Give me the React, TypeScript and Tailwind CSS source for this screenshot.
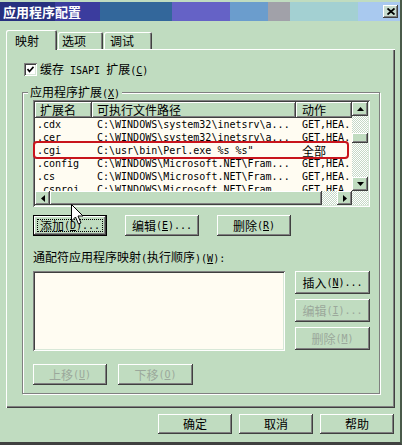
import React from "react";

type C = { children?: React.ReactNode };

const A = ({ children }: C) => (
  <span className="font-['DejaVu_Sans_Mono'] text-[10px]">{children}</span>
);
const U = ({ children }: C) => <span className="underline underline-offset-1">{children}</span>;

function Btn({
  size,
  children,
  disabled = false,
  isDefault = false,
}: {
  size: string;
  children: React.ReactNode;
  disabled?: boolean;
  isDefault?: boolean;
}) {
  const txt = disabled ? "text-[#9ba89b]" : "text-black";
  if (isDefault) {
    return (
      <div className={`${size} flex border border-black`}>
        <div className="flex flex-1 p-[3px] shadow-[inset_-1px_-1px_#404040,inset_1px_1px_#ffffff,inset_-2px_-2px_#808080]">
          <div className={`flex flex-1 items-center justify-center border border-dotted border-black ${txt}`}>
            {children}
          </div>
        </div>
      </div>
    );
  }
  return (
    <div
      className={`${size} flex items-center justify-center shadow-[inset_-1px_-1px_#404040,inset_1px_1px_#ffffff,inset_-2px_-2px_#808080] ${txt}`}
    >
      {children}
    </div>
  );
}

function Arrow({ dir }: { dir: "up" | "down" | "left" | "right" }) {
  const pts =
    dir === "up"
      ? "0,4 7,4 3.5,0"
      : dir === "down"
      ? "0,0 7,0 3.5,4"
      : dir === "left"
      ? "4,0 4,7 0,3.5"
      : "0,0 0,7 4,3.5";
  const w = dir === "up" || dir === "down" ? 7 : 4;
  const h = dir === "up" || dir === "down" ? 4 : 7;
  return (
    <svg width={w} height={h} viewBox={`0 0 ${w} ${h}`}>
      <polygon points={pts} fill="#000" />
    </svg>
  );
}

const rows: [string, string, string][] = [
  [".cdx", "C:\\WINDOWS\\system32\\inetsrv\\a...", "GET,HEA..."],
  [".cer", "C:\\WINDOWS\\system32\\inetsrv\\a...", "GET,HEA..."],
  [".cgi", "C:\\usr\\bin\\Perl.exe %s %s\"", "全部"],
  [".config", "C:\\WINDOWS\\Microsoft.NET\\Fram...", "GET,HEA..."],
  [".cs", "C:\\WINDOWS\\Microsoft.NET\\Fram...", "GET,HEA..."],
  [".csproj", "C:\\WINDOWS\\Microsoft.NET\\Fram...", "GET,HEA..."],
];

export default function App() {
  return (
    <div className="relative w-[402px] h-[445px] overflow-hidden bg-[#c0dcc0] font-['Noto_Sans_CJK_SC'] text-[12px] leading-[14px] text-black border-r-2 border-b-[3px] border-r-[#4a5a4a] border-b-[#404040]">
      {/* Title bar */}
      <div className="mt-[2px] h-[19px] flex items-center pl-[3px] bg-[linear-gradient(90deg,#27307f_0px,#27307f_55px,#3b3c9e_55px,#3b3c9e_100px,#33679b_100px,#33679b_172px,#6562c6_172px,#6562c6_230px,#6b9dcd_230px,#6b9dcd_268px,#a1a1a9_268px,#a1a1a9_290px,#a3d0d2_290px,#a3d0d2_358px,#a9c9ef_358px)]">
        <span className="text-white font-bold text-[13px] leading-[15px]">应用程序配置</span>
        <div className="ml-auto mr-[2px] w-[15px] h-[13px] flex items-center justify-center bg-[#c8dcd0] shadow-[inset_-1px_-1px_#404040,inset_1px_1px_#ffffff,inset_-2px_-2px_#808080]">
          <svg width="8" height="7" viewBox="0 0 8 7">
            <path d="M0.5 0.5 L7.5 6.5 M7.5 0.5 L0.5 6.5" stroke="#000" strokeWidth="1.8" />
          </svg>
        </div>
      </div>

      {/* Tabs */}
      <div className="relative z-10 mt-[9px] h-[20px] pl-[6px] flex items-end">
        <div className="w-[51px] h-[20px] pl-[9px] pt-[4px] bg-[#c0dcc0] rounded-t-[2px] shadow-[inset_1px_1px_#ffffff,inset_-1px_0_#404040,inset_-2px_0_#808080]">
          映射
        </div>
        <div className="ml-[1px] mb-[1px] w-[45px] h-[17px] pl-[4px] pt-[2px] rounded-t-[2px] shadow-[inset_1px_1px_#ffffff,inset_-1px_0_#404040,inset_-2px_0_#808080]">
          选项
        </div>
        <div className="ml-[1px] mb-[1px] w-[48px] h-[17px] pl-[6px] pt-[2px] rounded-t-[2px] shadow-[inset_1px_1px_#ffffff,inset_-1px_0_#404040,inset_-2px_0_#808080]">
          调试
        </div>
      </div>

      {/* Tab panel */}
      <div className="-mt-[1px] ml-[6px] w-[389px] h-[359px] pl-[16px] pt-[14px] shadow-[inset_1px_1px_#ffffff,inset_-1px_-1px_#404040,inset_-2px_-2px_#808080]">
        <div className="flex items-center h-[13px] pl-[2px]">
          <div className="w-[13px] h-[13px] bg-white flex items-center justify-center shadow-[inset_1px_1px_#808080,inset_-1px_-1px_#ffffff,inset_2px_2px_#404040,inset_-2px_-2px_#d8e8d8]">
            <svg width="7" height="7" viewBox="0 0 7 7">
              <path d="M0.5 3 L2.5 5.5 L6.5 0.8" stroke="#000" strokeWidth="1.7" fill="none" />
            </svg>
          </div>
          <span className="ml-[3px] whitespace-nowrap">
            缓存<A> ISAPI </A>扩展<A>(<U>C</U>)</A>
          </span>
        </div>

        {/* Group box */}
        <div className="relative mt-[16px] w-[358px] border border-[#808080] shadow-[inset_1px_1px_#ffffff,1px_1px_#ffffff] pl-[10px] pt-[7px] pb-[8px]">
          <span className="absolute -top-[8px] left-[5px] px-[2px] bg-[#c0dcc0] leading-[14px] whitespace-nowrap">
            应用程序扩展<A>(<U>X</U>)</A>
          </span>

          {/* List view */}
          <div className="relative w-[337px] h-[107px] p-[2px] bg-[#fffcf2] shadow-[inset_1px_1px_#808080,inset_-1px_-1px_#ffffff,inset_2px_2px_#404040,inset_-2px_-2px_#d8e8d8]">
            <div className="flex h-[89px]">
              <div className="w-[317px] overflow-hidden">
                <div className="flex h-[16px] bg-[#c0dcc0] leading-[16px]">
                  <div className="w-[57px] pl-[5px] shadow-[inset_-1px_-1px_#404040,inset_1px_1px_#ffffff,inset_-2px_-2px_#808080]">扩展名</div>
                  <div className="w-[204px] pl-[5px] shadow-[inset_-1px_-1px_#404040,inset_1px_1px_#ffffff,inset_-2px_-2px_#808080]">可执行文件路径</div>
                  <div className="w-[56px] pl-[6px] shadow-[inset_-1px_-1px_#404040,inset_1px_1px_#ffffff,inset_-2px_-2px_#808080]">动作</div>
                </div>
                {rows.map((r, i) => (
                  <div key={i} className="flex h-[13px] leading-[13px] whitespace-nowrap">
                    <div className="w-[57px] pl-[2px] overflow-hidden font-['DejaVu_Sans_Mono'] text-[10px]">{r[0]}</div>
                    <div className="w-[204px] pl-[5px] overflow-hidden font-['DejaVu_Sans_Mono'] text-[10px]">{r[1]}</div>
                    {r[2] === "全部" ? (
                      <div className="w-[56px] pl-[6px] overflow-hidden text-[12px]">{r[2]}</div>
                    ) : (
                      <div className="w-[56px] pl-[6px] overflow-hidden font-['DejaVu_Sans_Mono'] text-[10px]">{r[2]}</div>
                    )}
                  </div>
                ))}
              </div>
              {/* vertical scrollbar */}
              <div className="w-[16px] flex flex-col">
                <div className="h-[14px] flex items-center justify-center bg-[#c0dcc0] shadow-[inset_-1px_-1px_#404040,inset_1px_1px_#ffffff,inset_-2px_-2px_#808080]">
                  <Arrow dir="up" />
                </div>
                <div className="h-[17px] bg-[repeating-conic-gradient(#ffffff_0_25%,#c6d8c6_0_50%)] bg-[length:2px_2px]" />
                <div className="h-[10px] bg-[#c0dcc0] shadow-[inset_-1px_-1px_#404040,inset_1px_1px_#ffffff,inset_-2px_-2px_#808080]" />
                <div className="h-[34px] bg-[repeating-conic-gradient(#ffffff_0_25%,#c6d8c6_0_50%)] bg-[length:2px_2px]" />
                <div className="h-[14px] flex items-center justify-center bg-[#c0dcc0] shadow-[inset_-1px_-1px_#404040,inset_1px_1px_#ffffff,inset_-2px_-2px_#808080]">
                  <Arrow dir="down" />
                </div>
              </div>
            </div>
            {/* horizontal scrollbar */}
            <div className="flex h-[14px]">
              <div className="w-[15px] flex items-center justify-center bg-[#c0dcc0] shadow-[inset_-1px_-1px_#404040,inset_1px_1px_#ffffff,inset_-2px_-2px_#808080]">
                <Arrow dir="left" />
              </div>
              <div className="w-[272px] bg-[#c0dcc0] shadow-[inset_-1px_-1px_#404040,inset_1px_1px_#ffffff,inset_-2px_-2px_#808080]" />
              <div className="w-[15px] bg-[repeating-conic-gradient(#ffffff_0_25%,#c6d8c6_0_50%)] bg-[length:2px_2px]" />
              <div className="w-[15px] flex items-center justify-center bg-[#c0dcc0] shadow-[inset_-1px_-1px_#404040,inset_1px_1px_#ffffff,inset_-2px_-2px_#808080]">
                <Arrow dir="right" />
              </div>
              <div className="w-[16px] bg-[repeating-conic-gradient(#ffffff_0_25%,#c6d8c6_0_50%)] bg-[length:2px_2px]" />
            </div>
            {/* red annotation */}
            <div className="absolute left-[0px] top-[41px] w-[316px] h-[18px] border-2 border-[#c8141c] rounded-[4px]" />
          </div>

          {/* buttons */}
          <div className="mt-[8px] flex gap-[18px]">
            <Btn size="w-[74px] h-[21px]" isDefault>
              添加<A>(<U>D</U>)...</A>
            </Btn>
            <Btn size="w-[74px] h-[21px]">
              编辑<A>(<U>E</U>)...</A>
            </Btn>
            <Btn size="w-[74px] h-[21px]">
              删除<A>(<U>R</U>)</A>
            </Btn>
          </div>

          <div className="mt-[14px] whitespace-nowrap">
            通配符应用程序映射<A>(</A>执行顺序<A>)(<U>W</U>):</A>
          </div>

          <div className="mt-[5px] flex gap-[10px]">
            <div className="w-[252px] h-[80px] bg-[#fffcf2] shadow-[inset_1px_1px_#808080,inset_-1px_-1px_#ffffff,inset_2px_2px_#404040,inset_-2px_-2px_#d8e8d8]" />
            <div className="flex flex-col gap-[5px]">
              <Btn size="w-[75px] h-[23px]">
                插入<A>(<U>N</U>)...</A>
              </Btn>
              <Btn size="w-[75px] h-[23px]" disabled>
                编辑<A>(<U>I</U>)...</A>
              </Btn>
              <Btn size="w-[75px] h-[23px]" disabled>
                删除<A>(<U>M</U>)</A>
              </Btn>
            </div>
          </div>

          <div className="mt-[13px] flex gap-[11px]">
            <Btn size="w-[74px] h-[21px]" disabled>
              上移<A>(<U>U</U>)</A>
            </Btn>
            <Btn size="w-[75px] h-[21px]" disabled>
              下移<A>(<U>O</U>)</A>
            </Btn>
          </div>
        </div>
      </div>

      {/* dialog buttons */}
      <div className="mt-[6px] flex justify-end gap-[7px] pr-[6px]">
        <Btn size="w-[74px] h-[20px]">确定</Btn>
        <Btn size="w-[74px] h-[20px]">取消</Btn>
        <Btn size="w-[74px] h-[20px]">帮助</Btn>
      </div>

      {/* mouse cursor */}
      <svg className="absolute left-[71px] top-[204px]" width="13" height="21" viewBox="0 0 13 21">
        <path d="M0.5 0.5 L0.5 17 L4.5 13 L7.5 20 L10 19 L7 12 L12 12 Z" fill="#fff" stroke="#000" strokeWidth="1" />
      </svg>
    </div>
  );
}
